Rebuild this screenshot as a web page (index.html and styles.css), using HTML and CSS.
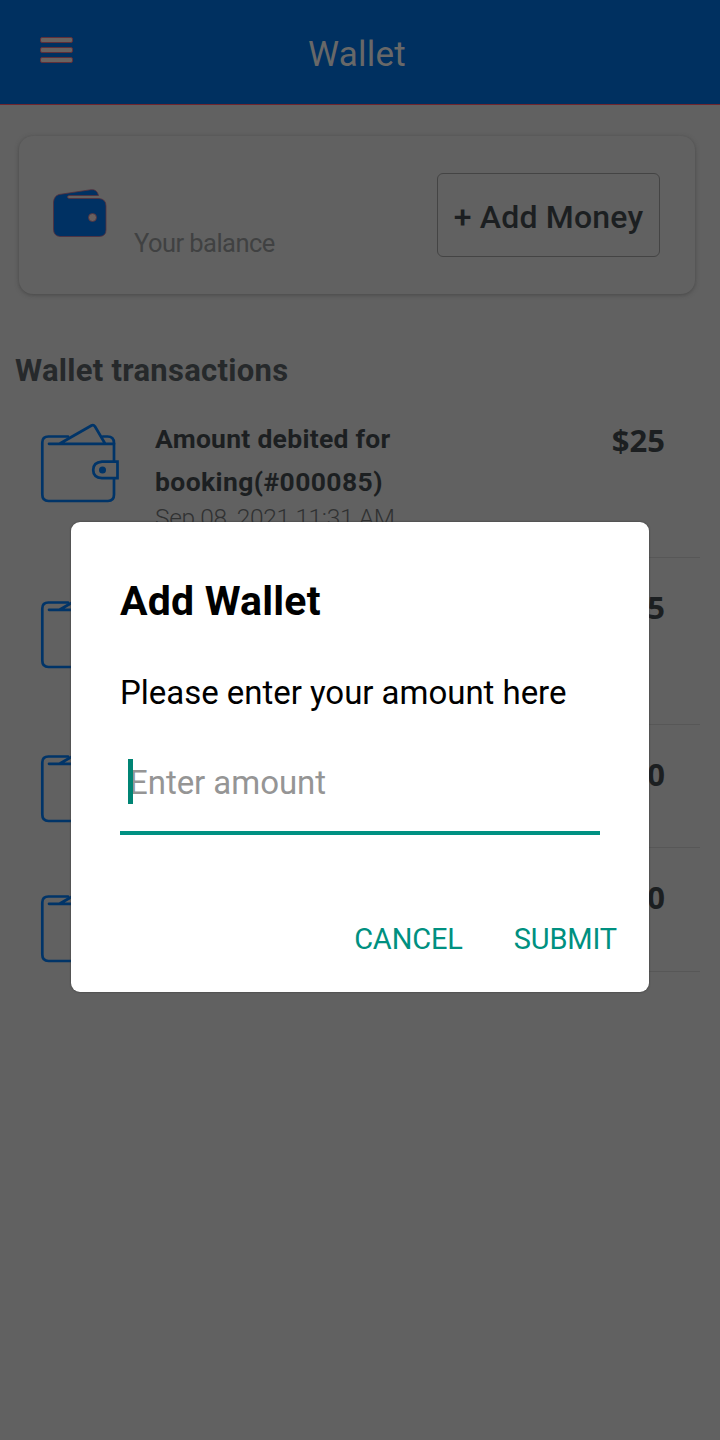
FILE: index.html
```html
<!DOCTYPE html>
<html lang="en">
<head>
<meta charset="utf-8">
<title>Wallet</title>
<link rel="stylesheet" href="styles.css">
</head>
<body>
<svg width="0" height="0" class="defs">
  <symbol id="wallet" viewBox="0 0 80 80">
    <g fill="none" stroke="currentColor" stroke-width="2.7" stroke-linecap="round" stroke-linejoin="round">
      <path d="M28 13.500H8.500Q2.300 13.500 2.300 19.500V71.500Q2.300 78 8.500 78H68Q74 78 74 71.500V56M74 38V20Q74 13.500 67.500 13.500H63"/>
      <path d="M9 20.800H74M20 20.500L51.500 2.500Q53.500 1.300 55 3.500L65 20.500"/>
      <path stroke-linecap="square" stroke-linejoin="miter" d="M77.500 38.700H62Q53.200 39.500 53.200 47Q53.200 54.500 62 55.200H77.500Z"/>
    </g>
    <circle cx="62.500" cy="47" r="3.500" fill="currentColor"/>
  </symbol>
</svg>
<div class="screen">
  <header class="topbar">
    <div class="menu"><i></i><i></i><i></i></div>
    <h1 class="title">Wallet</h1>
  </header>
  <section class="card">
    <svg class="purse" width="56" height="50" viewBox="0 0 56 50">
      <path fill="#003163" stroke="#55303c" stroke-width=".8" d="M7 5.500L39 .700Q45 0 46.500 6.500H17Q13.500 8 17 9.500H47Q54 10 54 17V41Q54 47 47.500 47.500H8Q1.500 47 1.500 40V13Q2 7 7 5.500Z"/>
      <circle cx="40.500" cy="28.500" r="4" fill="#68605f" stroke="#55303c" stroke-width=".8"/>
    </svg>
    <span class="balance">Your balance</span>
    <button class="add">+ Add Money</button>
  </section>
  <h2 class="heading">Wallet transactions</h2>
  <main class="list">
    <div class="row first"><svg class="icon"><use href="#wallet"/></svg>
      <div class="info"><div class="name">Amount debited for</div><div class="name second">booking(#000085)</div><div class="date">Sep 08, 2021 11:31 AM</div></div>
      <div class="amount">$25</div></div>
    <div class="row next"><svg class="icon"><use href="#wallet"/></svg><div class="info"></div><div class="amount">5</div></div>
    <div class="row third"><svg class="icon"><use href="#wallet"/></svg><div class="info"></div><div class="amount">0</div></div>
    <div class="row fourth"><svg class="icon"><use href="#wallet"/></svg><div class="info"></div><div class="amount">0</div></div>
  </main>
  <div class="dialog">
    <h3 class="dtitle">Add Wallet</h3>
    <p class="message">Please enter your amount here</p>
    <div class="field"><span class="hint">Enter amount</span><i class="caret"></i></div>
    <div class="actions"><span class="cancel">CANCEL</span><span class="submit">SUBMIT</span></div>
  </div>
</div>
</body>
</html>
```
FILE: styles.css
```css
* { box-sizing: border-box; }
body { margin: 0; background: #616161; font-family: Roboto, "Liberation Sans", sans-serif; color: #1c1f21; }
h1, h2, h3, p { margin: 0; }
.defs { position: absolute; }
.screen { position: relative; width: 720px; height: 1440px; overflow: hidden; }
.topbar { height: 105px; background: #003060; border-bottom: 1px solid #70272f; display: grid; grid-template-columns: 74px 1fr 80px; padding-top: 37px; }
.menu { padding-left: 40px; display: flex; flex-direction: column; gap: 4px; }
.menu i { display: block; width: 33px; height: 6px; border-radius: 2px; background: #686361; border: 1px solid #60303a; }
.title { font-size: 35px; font-weight: 400; line-height: 36px; color: #686868; text-align: center; letter-spacing: .2px; }
.card { margin: 31px 25px 0 19px; height: 158px; border-radius: 14px; background: #616161; box-shadow: 0 1px 4px 0 #484848; display: flex; align-items: flex-start; padding: 37px 35px 0 33px; }
.purse { margin-top: 16px; flex: none; }
.balance { margin: 54px 0 0 26px; font-size: 25.500px; line-height: 32px; letter-spacing: -.55px; color: #404142; width: 160px; white-space: nowrap; }
.add { margin-left: auto; width: 223px; height: 84px; border: 1px solid #444; border-radius: 6px; background: none; padding: 3px 0 0; font: 500 32px Roboto, sans-serif; letter-spacing: .18px; color: #1c1f21; white-space: nowrap; }
.heading { margin: 57px 0 0 15px; font-size: 31px; line-height: 40px; height: 40px; font-weight: 700; letter-spacing: .28px; color: #26292b; white-space: nowrap; }
.row { display: flex; margin: 0 20px 0 40px; height: 167px; background: linear-gradient(#575757, #575757) 35px 100% / 100% 1px no-repeat; }
.third { height: 123px; }
.fourth { height: 124px; }
.icon { width: 80px; height: 80px; flex: none; margin-top: 32px; color: #003468; }
.next .icon { margin-top: 31px; }
.third .icon { margin-top: 18px; }
.fourth .icon { margin-top: 35px; }
.info { flex: 1; padding: 26px 0 0 35px; white-space: nowrap; }
.name { font-size: 26.500px; line-height: 43px; font-weight: 700; letter-spacing: .27px; }
.second { letter-spacing: .4px; }
.date { font-size: 24.500px; line-height: 32px; font-weight: 300; letter-spacing: -.35px; color: #303132; margin-top: -1px; }
.amount { padding: 29px 35px 0 0; font: 700 31px/40px "Open Sans", "Noto Sans", sans-serif; }
.dialog { position: absolute; left: 71px; top: 522px; width: 578px; height: 470px; background: #fff; border-radius: 9px; box-shadow: 0 0 2px #333; padding: 54px 49px 0; color: #000; white-space: nowrap; }
.dtitle { font-size: 41px; line-height: 50px; font-weight: 700; letter-spacing: .2px; }
.message { margin-top: 46px; font-size: 33px; line-height: 41px; height: 40px; letter-spacing: -.03px; }
.field { position: relative; margin-top: 30px; border-bottom: 4px solid #009182; height: 93px; padding: 21px 0 0 9px; font-size: 33px; line-height: 40px; letter-spacing: -.05px; color: #959595; }
.caret { position: absolute; left: 8px; top: 17px; width: 4.500px; height: 45px; background: #008474; }
.actions { display: flex; justify-content: flex-end; margin: 86px -17px 0 0; gap: 51px; font-size: 29px; line-height: 36px; letter-spacing: -.15px; color: #009080; }
```
